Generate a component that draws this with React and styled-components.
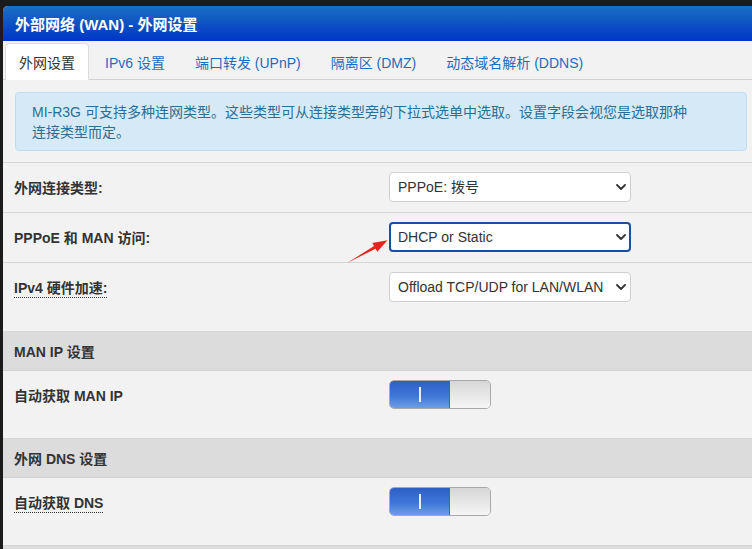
import styled, { createGlobalStyle } from "styled-components";

const GlobalStyle = createGlobalStyle`
    html, body {
        margin: 0;
        padding: 0;
        background-color: #1b1b1b;
        font-family: "Liberation Sans", "Noto Sans CJK SC", sans-serif;
        color: #333;
    }
`

const tabs = ["外网设置", "IPv6 设置", "端口转发 (UPnP)", "隔离区 (DMZ)", "动态域名解析 (DDNS)"]

function Chevron() {
    return (
        <ChevronIcon viewBox="0 0 10 6" width="10" height="6">
            <path d="M1 1l4 4 4-4" fill="none" stroke="#333" strokeWidth="1.8" strokeLinecap="round" strokeLinejoin="round" />
        </ChevronIcon>
    )
}

function Select({ value, focused, options }) {
    return (
        <SelectWrap>
            <SelectBox defaultValue={value} $focused={focused}>
                {options.map((o) => <option key={o}>{o}</option>)}
            </SelectBox>
            <Chevron />
        </SelectWrap>
    )
}

function Toggle() {
    return (
        <ToggleBox>
            <ToggleOn><ToggleMark /></ToggleOn>
            <ToggleOff />
        </ToggleBox>
    )
}

export default function App() {
    return (
        <>
            <GlobalStyle />
            <Page>
                <Panel>
                    <Header>外部网络 (WAN) - 外网设置</Header>
                    <TabBar>
                        {tabs.map((t, i) => (
                            <Tab key={t} $active={i === 0}>{t}</Tab>
                        ))}
                    </TabBar>
                    <Info>
                        MI-R3G 可支持多种连网类型。这些类型可从连接类型旁的下拉式选单中选取。设置字段会视您是选取那种<br />
                        连接类型而定。
                    </Info>
                    <Form>
                        <Row>
                            <Label>外网连接类型:</Label>
                            <Select value="PPPoE: 拨号" options={["PPPoE: 拨号", "DHCP", "Static IP"]} />
                        </Row>
                        <Row>
                            <Label>PPPoE 和 MAN 访问:</Label>
                            <Select value="DHCP or Static" focused options={["DHCP or Static", "No"]} />
                        </Row>
                        <Row $tall>
                            <Label><Hint>IPv4 硬件加速:</Hint></Label>
                            <Select value="Offload TCP/UDP for LAN/WLAN" options={["Offload TCP/UDP for LAN/WLAN", "Disable"]} />
                        </Row>
                        <Section>MAN IP 设置</Section>
                        <Row $tall>
                            <Label>自动获取 MAN IP</Label>
                            <Toggle />
                        </Row>
                        <Section>外网 DNS 设置</Section>
                        <Row $tall>
                            <Label><Hint>自动获取 DNS</Hint></Label>
                            <Toggle />
                        </Row>
                        <Section />
                    </Form>
                </Panel>
                <Arrow viewBox="340 234 52 32" width="52" height="32">
                    <polygon
                        points="347,263 375.5,248.7 377.3,251.8 387.5,240.3 372.3,243.1 374.1,246.1"
                        fill="#e8231f"
                    />
                </Arrow>
            </Page>
        </>
    )
}

const Page = styled.div`
    position: relative;
    padding: 6px 0 0 3px;
    width: 752px;
    height: 549px;
    box-sizing: border-box;
    overflow: hidden;
`

const Panel = styled.div`
    background-color: #f2f2f2;
    border-top-left-radius: 5px;
    overflow: hidden;
    height: 100%;
`

const Header = styled.div`
    height: 35px;
    display: flex;
    align-items: center;
    padding-left: 12px;
    background: linear-gradient(to bottom, #1b6fc2, #0035c6);
    color: #fff;
    font-size: 15px;
    font-weight: bold;
`

const TabBar = styled.div`
    display: flex;
    padding: 2px 0 0 2px;
    border-bottom: 1px solid #d2d2d2;
    height: 36px;
`

const Tab = styled.div`
    display: flex;
    align-items: center;
    padding: 0 13px;
    margin-right: 2px;
    margin-bottom: -1px;
    font-size: 14px;
    border: 1px solid ${(p) => (p.$active ? "#dcdcdc" : "transparent")};
    border-bottom-color: ${(p) => (p.$active ? "#fff" : "transparent")};
    border-radius: 4px 4px 0 0;
    background-color: ${(p) => (p.$active ? "#fff" : "transparent")};
    color: ${(p) => (p.$active ? "#333" : "#1d6dbd")};
`

const Info = styled.div`
    margin: 12px 5px 11px 12px;
    padding: 9px 16px 8px;
    background-color: #d5eaf6;
    border: 1px solid #bcdff0;
    border-radius: 4px;
    color: #2b6e96;
    font-size: 14px;
    line-height: 20px;
`

const Form = styled.div`
    border-top: 1px solid #d6d6d6;
`

const Row = styled.div`
    display: flex;
    align-items: center;
    padding: ${(p) => (p.$tall ? "9px 0 29px 11px" : "9px 0 10px 11px")};
    border-bottom: 1px solid #d6d6d6;
`

const Label = styled.div`
    width: 375px;
    flex-shrink: 0;
    font-size: 14px;
    font-weight: bold;
    color: #333;
`

const Hint = styled.span`
    border-bottom: 1px dotted #333;
    padding-bottom: 1px;
`

const Section = styled.div`
    height: 38px;
    display: flex;
    align-items: center;
    padding-left: 11px;
    background-color: #dcdcdc;
    border-bottom: 1px solid #d2d2d2;
    font-size: 14px;
    font-weight: bold;
    color: #333;
`

const SelectWrap = styled.div`
    position: relative;
    width: 242px;
    height: 30px;
`

const SelectBox = styled.select`
    appearance: none;
    width: 100%;
    height: 100%;
    box-sizing: border-box;
    padding: 0 0 0 ${(p) => (p.$focused ? "7px" : "8px")};
    background-color: #fff;
    border: ${(p) => (p.$focused ? "2px solid #1b4ea3" : "1px solid #cfcfcf")};
    border-radius: 4px;
    font-family: "Liberation Sans", "Noto Sans CJK SC", sans-serif;
    font-size: 14px;
    color: #333;
    outline: none;
`

const ChevronIcon = styled.svg`
    position: absolute;
    right: 5px;
    top: 12px;
    pointer-events: none;
`

const ToggleBox = styled.div`
    display: flex;
    width: 102px;
    height: 29px;
    box-sizing: border-box;
    border: 1px solid #a9a9a9;
    border-radius: 5px;
    overflow: hidden;
`

const ToggleOn = styled.div`
    width: 59px;
    display: flex;
    align-items: center;
    justify-content: center;
    background: linear-gradient(to bottom, #2d60c4, #3f76d6 55%, #6c9ee6);
    border-right: 1px solid #3a66b8;
`

const ToggleMark = styled.div`
    width: 2px;
    height: 15px;
    background-color: #e8f0ff;
`

const ToggleOff = styled.div`
    flex: 1;
    background: linear-gradient(to bottom, #d6d6d6, #f6f6f6);
`

const Arrow = styled.svg`
    position: absolute;
    left: 340px;
    top: 234px;
`
